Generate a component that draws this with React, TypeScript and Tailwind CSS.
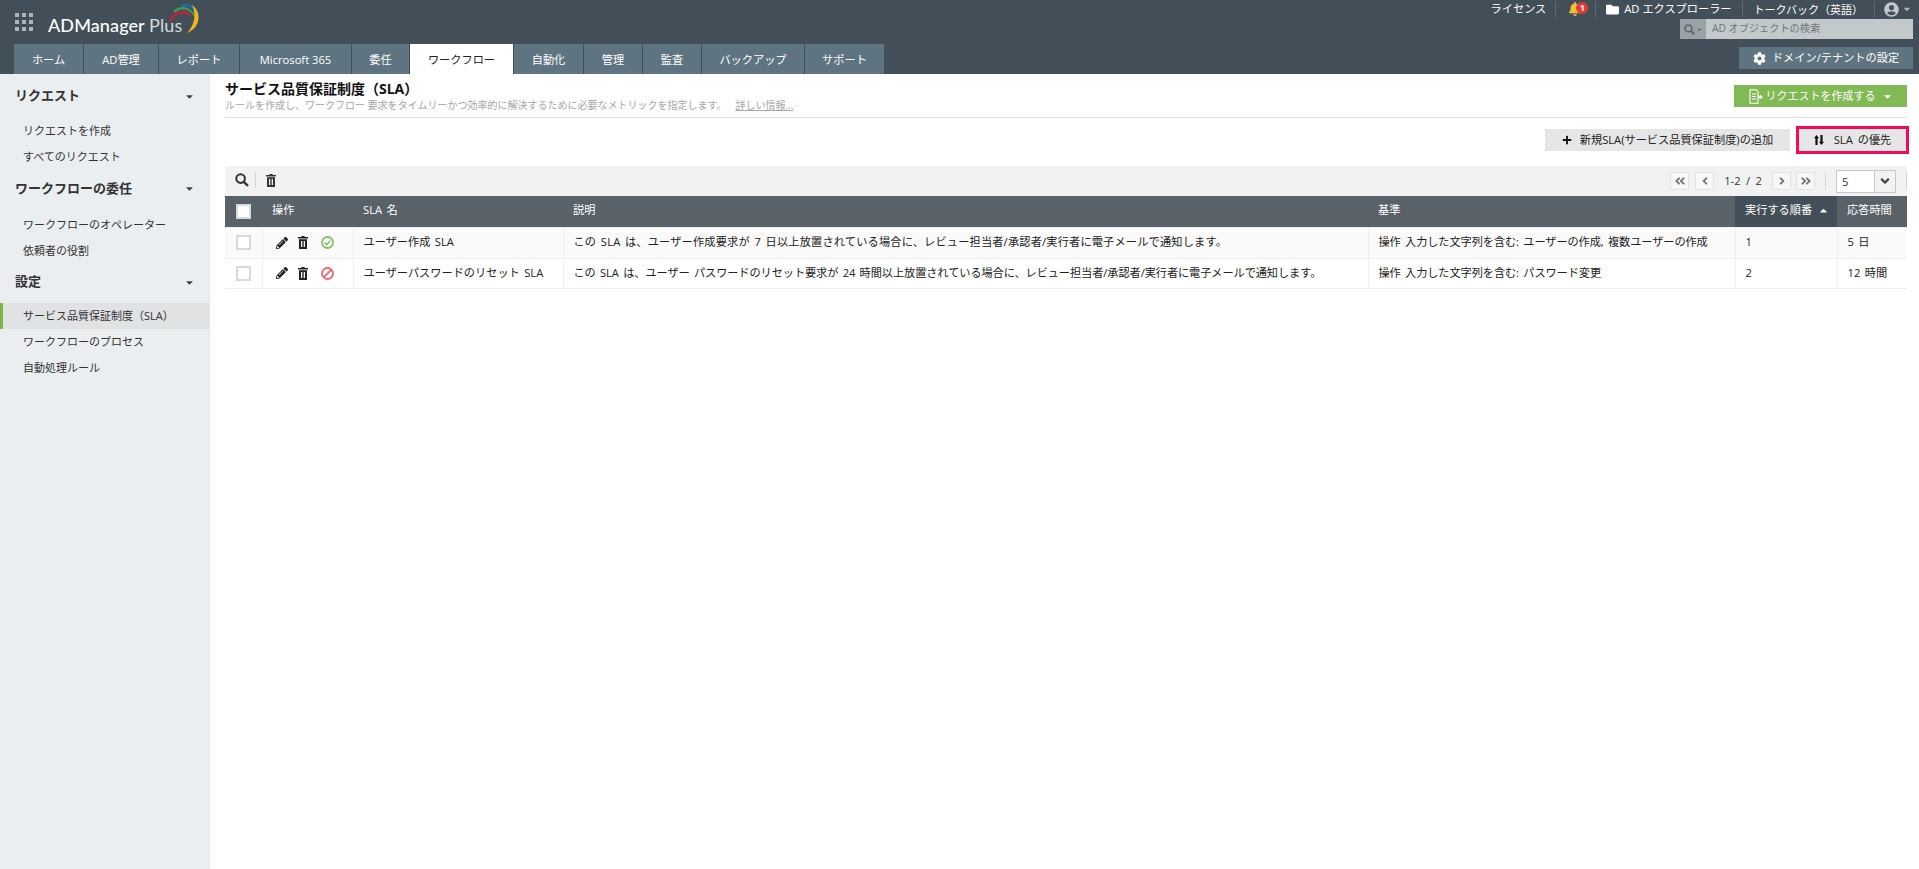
import React from "react";
import { FaBell, FaFolder, FaCog, FaPlus, FaPencilAlt, FaUserCircle, FaCaretDown, FaCaretUp, FaAngleDoubleLeft, FaAngleDoubleRight, FaAngleLeft, FaAngleRight, FaAngleDown } from "react-icons/fa";

const tabs = [
  { t: "ホーム", w: "w-[69px]" },
  { t: "AD管理", w: "w-[74px]" },
  { t: "レポート", w: "w-[80px]" },
  { t: "Microsoft 365", w: "w-[111px]" },
  { t: "委任", w: "w-[57px]" },
  { t: "ワークフロー", w: "w-[103px]", active: true },
  { t: "自動化", w: "w-[69px]" },
  { t: "管理", w: "w-[58px]" },
  { t: "監査", w: "w-[58px]" },
  { t: "バックアップ", w: "w-[102px]" },
  { t: "サポート", w: "w-[79px]" },
];

const FONT = "font-['Open_Sans','Noto_Sans_CJK_JP',sans-serif]";

function Trash({ size = 13, cls = "" }: { size?: number; cls?: string }) {
  return (
    <svg className={cls} width={size * 0.77} height={size} viewBox="0 0 10 13" fill="currentColor">
      <path d="M3.4 0h3.2v1H10v1.4H0V1h3.4z" />
      <path fillRule="evenodd" d="M1 3.2h8V13H1zM3 5v6h1.3V5zM5.7 5v6H7V5z" />
    </svg>
  );
}

function Search({ size = 14, cls = "" }: { size?: number; cls?: string }) {
  return (
    <svg className={cls} width={size} height={size} viewBox="0 0 14 14" fill="none" stroke="currentColor">
      <circle cx="5.6" cy="5.6" r="4.3" strokeWidth="2" />
      <path d="M8.8 8.8l4.2 4.2" strokeWidth="2.4" />
    </svg>
  );
}

function OkIcon() {
  return (
    <svg className="ml-[13px]" width="13" height="13" viewBox="0 0 13 13" fill="none" stroke="#86bf68">
      <circle cx="6.5" cy="6.5" r="5.5" strokeWidth="1.8" />
      <path d="M3.8 6.6l2 2 3.5-3.8" strokeWidth="1.6" />
    </svg>
  );
}

function BanIcon() {
  return (
    <svg className="ml-[13px]" width="13" height="13" viewBox="0 0 13 13" fill="none" stroke="#f2646c">
      <circle cx="6.5" cy="6.5" r="5.5" strokeWidth="1.8" />
      <path d="M2.8 10.2l7.4-7.4" strokeWidth="1.8" />
    </svg>
  );
}

function Logo() {
  return (
    <div className="relative flex items-center h-[44px] pl-[15px]">
      <div className="grid grid-cols-3 gap-[3px] w-[18px]">
        {Array.from({ length: 9 }).map((_, i) => (
          <div key={i} className="w-[4px] h-[4px] bg-[#adb4b8]" />
        ))}
      </div>
      <span className="ml-[15px] mt-[5px] text-[18px] leading-none text-white font-['Lato',sans-serif] font-medium tracking-[0.1px]">
        ADManager <span className="text-[#d5dadd] font-normal">Plus</span>
      </span>
      <svg className="absolute left-[168px] top-[3px]" width="34" height="32" viewBox="0 0 34 32" fill="none">
        <path d="M2 18 C6 9 15 7 22 12" stroke="#c4203b" strokeWidth="2.4" />
        <path d="M6 9 C12 3 22 4 27 13" stroke="#3f9a4a" strokeWidth="2.4" />
        <path d="M13 3 C20 0 27 4 30 12" stroke="#1c6fb5" strokeWidth="2.4" />
        <path d="M24 2 C33 8 34 24 19 30 C26 23 29 12 24 2 Z" fill="#f0b51a" />
      </svg>
    </div>
  );
}

function Sep() {
  return <div className="w-px h-[16px] bg-[#5d6a72]" />;
}

function TopRight() {
  return (
    <div className="flex flex-col items-end pr-[6px] text-white">
      <div className="flex items-center h-[19px] pb-[1px] text-[11.2px] leading-none">
        <span className="mr-[9px]">ライセンス</span>
        <Sep />
        <span className="relative ml-[12px] mr-[13px] block h-[15px] w-[14px]">
          <FaBell className="text-[14px] text-[#f2c037]" />
          <span className="absolute left-[8px] top-0 flex h-[12px] w-[12px] items-center justify-center rounded-full bg-[#e53935] text-[9px] leading-none font-bold text-white">1</span>
        </span>
        <Sep />
        <FaFolder className="ml-[10px] mr-[5px] text-[13px] text-white" />
        <span className="mr-[10px]">AD エクスプローラー</span>
        <Sep />
        <span className="ml-[11px] mr-[11px] text-[11px]">トークバック（英語）</span>
        <Sep />
        <FaUserCircle className="ml-[9px] text-[15px] text-[#c3c8cb]" />
        <FaCaretDown className="ml-[3px] mr-[1px] text-[10px] text-[#aab2b7]" />
      </div>
      <div className="flex h-[20px] w-[233px]">
        <div className="flex w-[26px] items-center justify-center gap-px bg-[#99a2a7] text-[#5a656c]">
          <Search size={11} />
          <FaCaretDown className="text-[7px]" />
        </div>
        <div className="flex flex-1 items-center bg-[#c3c8cb] pl-[6px] text-[10.2px] text-[#6d767c]">AD オブジェクトの検索</div>
      </div>
      <div className="mt-[8px] flex h-[22px] w-[174px] items-center justify-center gap-[6px] bg-[#5f7481] text-[11.2px]">
        <FaCog className="text-[13px]" />
        <span>ドメイン/テナントの設定</span>
      </div>
    </div>
  );
}

function Header() {
  return (
    <header className="flex h-[74px] shrink-0 justify-between bg-[#434f58]">
      <div className="flex flex-col">
        <Logo />
        <nav className="flex h-[30px] gap-px pl-[14px] text-[11.2px]">
          {tabs.map((x) => (
            <div
              key={x.t}
              className={`${x.w} flex items-center justify-center pt-[2px] ${x.active ? "bg-white text-[#222]" : "bg-[#5f7481] text-white"}`}
            >
              {x.t}
            </div>
          ))}
        </nav>
      </div>
      <TopRight />
    </header>
  );
}

function SideHead({ t, cls }: { t: string; cls: string }) {
  return (
    <div className={`flex items-center justify-between pl-[15px] pr-[14px] text-[13px] font-bold text-[#333] ${cls}`}>
      <span>{t}</span>
      <FaCaretDown className="text-[11px] text-[#444]" />
    </div>
  );
}

function SideItem({ t, active }: { t: string; active?: boolean }) {
  return (
    <div className={`flex h-[26px] items-center text-[11px] text-[#333] ${active ? "border-l-[3px] border-[#7ab648] bg-[#e0e2e4] pl-[20px]" : "pl-[23px]"}`}>
      {t}
    </div>
  );
}

function Sidebar() {
  return (
    <aside className="w-[210px] shrink-0 bg-[#ebeef0] border-r border-[#e4e7e9]">
      <SideHead t="リクエスト" cls="h-[44px]" />
      <div>
        <SideItem t="リクエストを作成" />
        <SideItem t="すべてのリクエスト" />
      </div>
      <SideHead t="ワークフローの委任" cls="h-[37px]" />
      <div className="mt-[5px]">
        <SideItem t="ワークフローのオペレーター" />
        <SideItem t="依頼者の役割" />
      </div>
      <SideHead t="設定" cls="h-[36px]" />
      <div className="mt-[3px]">
        <SideItem t="サービス品質保証制度（SLA）" active />
        <SideItem t="ワークフローのプロセス" />
        <SideItem t="自動処理ルール" />
      </div>
    </aside>
  );
}

function Pager({ children }: { children: React.ReactNode }) {
  return (
    <div className="flex h-[18px] w-[19px] items-center justify-center border border-[#e3e3e3] bg-[#f7f7f7] text-[12px] text-[#777]">
      {children}
    </div>
  );
}

function Toolbar() {
  return (
    <div className="flex h-[30px] items-center justify-between bg-[#f2f2f2] text-[#333]">
      <div className="flex items-center pl-[10px] pb-[2px]">
        <Search size={14} cls="text-[#333]" />
        <div className="ml-[6px] mr-[10px] h-[16px] w-px bg-[#d5d5d5]" />
        <Trash size={13} cls="text-[#333]" />
      </div>
      <div className="flex items-center text-[11.2px]">
        <Pager><FaAngleDoubleLeft /></Pager>
        <div className="w-[6px]" />
        <Pager><FaAngleLeft /></Pager>
        <span className="w-[58px] text-center [word-spacing:2.5px]">1-2 / 2</span>
        <Pager><FaAngleRight /></Pager>
        <div className="w-[5px]" />
        <Pager><FaAngleDoubleRight /></Pager>
        <div className="ml-[10px] mr-[10px] h-[18px] w-px bg-[#d5d5d5]" />
        <div className="flex h-[23px] w-[60px] border border-[#c8c8c8] bg-white">
          <span className="flex-1 pl-[5px] leading-[22px]">5</span>
          <span className="flex w-[21px] items-center justify-center border-l border-[#c8c8c8] bg-[#f2f2f2] text-[14px] text-[#444]"><FaAngleDown /></span>
        </div>
        <div className="ml-[10px] h-[18px] w-px bg-[#d5d5d5]" />
      </div>
    </div>
  );
}

function Check({ head }: { head?: boolean }) {
  return <div className={`mx-auto h-[15px] w-[15px] border-2 ${head ? "border-[#d8dcdf] bg-white" : "border-[#d9d9d9] bg-white"}`} />;
}

const rows = [
  {
    name: "ユーザー作成 SLA",
    desc: "この SLA は、ユーザー作成要求が 7 日以上放置されている場合に、レビュー担当者/承認者/実行者に電子メールで通知します。",
    descCls: "tracking-[0.18px]",
    crit: "操作 入力した文字列を含む: ユーザーの作成, 複数ユーザーの作成",
    order: "1",
    time: "5 日",
    ok: true,
  },
  {
    name: "ユーザーパスワードのリセット SLA",
    desc: "この SLA は、ユーザー パスワードのリセット要求が 24 時間以上放置されている場合に、レビュー担当者/承認者/実行者に電子メールで通知します。",
    descCls: "tracking-[-0.08px]",
    crit: "操作 入力した文字列を含む: パスワード変更",
    order: "2",
    time: "12 時間",
    ok: false,
  },
];

function Table() {
  return (
    <table className="w-full table-fixed border-collapse text-[11.2px] text-[#222] [word-spacing:1.5px]">
      <colgroup>
        <col className="w-[37px]" />
        <col className="w-[91px]" />
        <col className="w-[210px]" />
        <col className="w-[805px]" />
        <col className="w-[367px]" />
        <col className="w-[102px]" />
        <col />
      </colgroup>
      <thead>
        <tr className="h-[31px] bg-[#586268] text-left text-white">
          <th className="font-normal"><Check head /></th>
          <th className="pb-[2px] pl-[10px] font-normal">操作</th>
          <th className="pb-[2px] pl-[10px] font-normal">SLA 名</th>
          <th className="pb-[2px] pl-[10px] font-normal">説明</th>
          <th className="pb-[2px] pl-[10px] font-normal">基準</th>
          <th className="bg-[#434f58] pb-[2px] pl-[10px] font-normal">
            <span className="flex items-center gap-[6px]">実行する順番<FaCaretUp className="text-[11px]" /></span>
          </th>
          <th className="pb-[2px] pl-[10px] font-normal">応答時間</th>
        </tr>
      </thead>
      <tbody>
        {rows.map((r, i) => (
          <tr key={r.name} className={i === 0 ? "h-[31px] bg-[#fafafa]" : "h-[30px] bg-white"}>
            <td className="border border-l-0 border-[#efefef]"><Check /></td>
            <td className="border border-[#efefef]">
              <div className="flex items-center pl-[13px] text-[#222]">
                <FaPencilAlt className="text-[12px]" />
                <Trash size={13} cls="ml-[10px]" />
                {r.ok ? <OkIcon /> : <BanIcon />}
              </div>
            </td>
            <td className="truncate border border-[#efefef] pl-[10px]">{r.name}</td>
            <td className={`truncate border border-[#efefef] pl-[10px] ${r.descCls}`}>{r.desc}</td>
            <td className="truncate border border-[#efefef] pl-[10px] tracking-[-0.08px]">{r.crit}</td>
            <td className="border border-[#efefef] pl-[10px]">{r.order}</td>
            <td className="border border-r-0 border-[#efefef] pl-[10px]">{r.time}</td>
          </tr>
        ))}
      </tbody>
    </table>
  );
}

function Main() {
  return (
    <main className="flex-1 pl-[15px] pr-[12px]">
      <div className="flex h-[44px] items-start justify-between border-b border-[#e2e2e2]">
        <div>
          <h1 className="mt-[6px] text-[14px] font-bold leading-[18px] text-[#111]">サービス品質保証制度（SLA）</h1>
          <p className="text-[10px] leading-[14px] text-[#a6a6a6]">
            ルールを作成し、ワークフロー 要求をタイムリーかつ効率的に解決するために必要なメトリックを指定します。
            <span className="ml-[9px] underline">詳しい情報...</span>
          </p>
        </div>
        <div className="mt-[11px] flex h-[22px] w-[173px] items-center justify-center gap-[3px] bg-[#81b955] text-[11px] text-white">
          <svg width="14" height="15" viewBox="0 0 14 15" fill="none" stroke="white" strokeWidth="1.1">
            <path d="M1 .7h6l2 2v11.6H1z" />
            <path d="M3 5h4M3 7.5h4M3 10h4" />
            <path d="M9.5 8h4M11.5 6v4" strokeWidth="1.6" />
          </svg>
          <span>リクエストを作成する</span>
          <FaCaretDown className="ml-[3px] text-[11px]" />
        </div>
      </div>
      <div className="flex h-[48px] items-center justify-end pb-[4px]">
        <div className="flex h-[22px] w-[245px] items-center justify-center gap-[8px] bg-[#e6e6e6] text-[11.2px] text-[#222]">
          <FaPlus className="text-[10px] text-[#111]" />
          <span>新規SLA(サービス品質保証制度)の追加</span>
        </div>
        <div className="ml-[6px] mr-[-2px] flex h-[28px] w-[113px] items-center justify-center gap-[10px] border-[3px] border-[#f50a5a] bg-[#e6e6e6] text-[11.2px] text-[#222] [word-spacing:2px]">
          <svg width="10" height="10" viewBox="0 0 10 10" fill="#111">
            <path d="M2.5 0L5 3.2H3.6V10H1.4V3.2H0z" />
            <path d="M7.5 10L5 6.8h1.4V0h2.2v6.8H10z" />
          </svg>
          <span>SLA の優先</span>
        </div>
      </div>
      <Toolbar />
      <Table />
    </main>
  );
}

export default function App() {
  return (
    <div className={`flex h-screen flex-col overflow-hidden bg-white ${FONT}`}>
      <Header />
      <div className="flex flex-1">
        <Sidebar />
        <Main />
      </div>
    </div>
  );
}
